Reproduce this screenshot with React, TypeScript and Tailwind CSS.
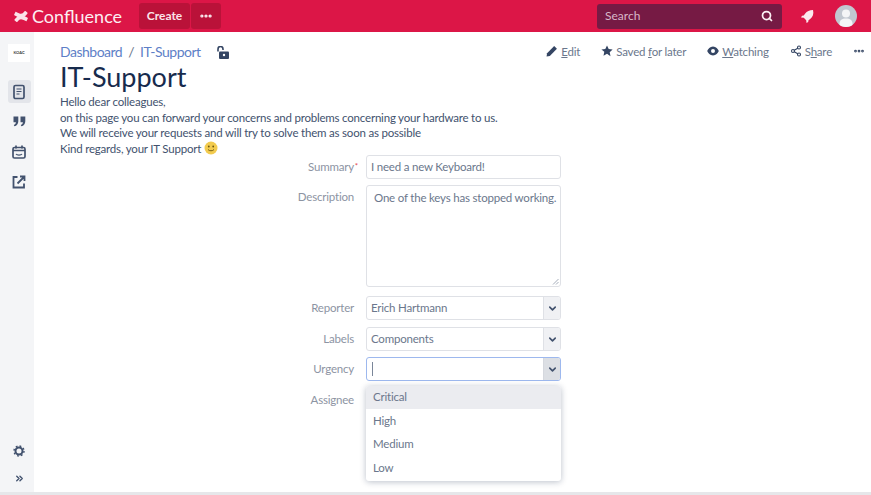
import React from "react";
import { Search, MoreHorizontal, ChevronDown, ChevronsRight, Share2 } from "lucide-react";

const font = { fontFamily: '"Lato", "Noto Sans", sans-serif' };

function Label({ children }: { children: React.ReactNode }) {
  return <div className="w-[332px] pr-[12px] text-right text-[#8d94a3] text-[11.5px] tracking-[-0.2px] leading-[24px] shrink-0">{children}</div>;
}

function Select({ value, focus }: { value?: string; focus?: boolean }) {
  return (
    <div className={`w-[195px] h-[24px] rounded-[3px] border flex overflow-hidden bg-white ${focus ? "border-[#9db8ee]" : "border-[#dfe1e6]"}`}>
      <div className="flex-1 flex items-center pl-[4px] text-[#6b778c] text-[11.5px] tracking-[-0.2px]">
        {focus ? <span className="w-px h-[14px] ml-px bg-[#7a8699]" /> : value}
      </div>
      <div className={`w-[17px] flex items-center justify-center border-l ${focus ? "bg-[#dcdfe4] border-[#d5d8de]" : "bg-[#f0f1f4] border-[#dfe1e6]"}`}>
        <ChevronDown size={11} strokeWidth={3.5} className="text-[#42526e]" />
      </div>
    </div>
  );
}

function Action({ icon, children }: { icon: React.ReactNode; children: React.ReactNode }) {
  return (
    <div className="flex items-center gap-[3px] text-[#6b778c] text-[11.5px] tracking-[-0.2px] leading-none">
      <span className="text-[#344563] -mt-[3px]">{icon}</span>
      {children}
    </div>
  );
}

export default function App() {
  return (
    <div style={font} className="w-[871px] h-[495px] overflow-hidden flex flex-col bg-white">
      <header className="h-[32px] shrink-0 bg-[#dc1647] flex items-center text-white">
        <div className="flex items-center pl-[14px] w-[139px]">
          <svg width="14" height="13" viewBox="0 0 14 13" fill="#fbe3e9">
            <path d="M0.5 9.6C2.8 6.6 4.6 5.2 7 5.2c2.2 0 4 1.2 6.6 2.6.3.2.4.5.2.8l-1.2 2.3c-.2.3-.5.4-.8.2C9.5 10 8.2 9.3 7 9.3c-1.1 0-2.3.8-3.6 2.5-.2.3-.5.3-.8.1L.7 10.5c-.3-.2-.4-.6-.2-.9z" />
            <path d="M13.5 3.4C11.2 6.4 9.4 7.8 7 7.8c-2.2 0-4-1.2-6.6-2.6-.3-.2-.4-.5-.2-.8L1.4 2.1c.2-.3.5-.4.8-.2C4.5 3 5.800 3.700 7 3.700c1.100 0 2.300-.8 3.600-2.500.2-.3.5-.3.8-.1l1.900 1.400c.3.2.4.6.2.9z" />
          </svg>
          <span className="ml-[4px] text-[18px] leading-none text-[#fdeef2]">Confluence</span>
        </div>
        <div className="w-[51px] h-[26px] rounded-[3px] bg-[#ba1239] flex items-center justify-center text-[12px] font-bold text-[#fbe3e9]">Create</div>
        <div className="ml-[1px] w-[30px] h-[26px] rounded-[3px] bg-[#ba1239] flex items-center justify-center">
          <MoreHorizontal size={14} strokeWidth={3.5} />
        </div>
        <div className="ml-[376px] w-[185px] h-[25px] rounded-[3px] bg-[#761a44] flex items-center justify-between pl-[8px] pr-[9px] text-[12px] text-[#d6b8c8]">
          Search
          <Search size={12} strokeWidth={3.5} className="text-[#fbf0f4]" />
        </div>
        <div className="ml-[18px] w-[14px] flex justify-center">
          <svg width="14" height="14" viewBox="0 0 14 14" fill="#fbe9ee">
            <path d="M13 1c-3.5 0-6 1.2-8 3.8L3.8 6.5 2 6.8 1 8.5l2.8.3 2.4 2.4.3 2.8 1.7-1 .3-1.8 1.7-1.2C12.8 8 14 5 13 1z" />
          </svg>
        </div>
        <div className="ml-[21px] w-[22px] h-[22px] rounded-full bg-[#c1c7d0] flex items-center justify-center overflow-hidden">
          <svg width="22" height="22" viewBox="0 0 22 22" fill="#f4f5f7">
            <circle cx="11" cy="8.5" r="4" />
            <path d="M4.5 19c0-4 2.5-5.5 6.5-5.5s6.5 1.5 6.500 5.500v3h-13z" />
          </svg>
        </div>
      </header>
      <div className="flex-1 flex min-h-0 border-b-[3px] border-[#e6e7ea]">
        <aside className="w-[34px] shrink-0 bg-[#f4f5f7] flex flex-col items-center text-[#42526e] pl-[4px] pt-[12px] pb-[8px]">
          <div className="w-[22px] h-[18px] bg-white flex items-center justify-center text-[4px] font-bold text-[#333] whitespace-nowrap overflow-hidden">
            <span>KOAC</span>
          </div>
          <div className="mt-[18px] w-[23px] h-[23px] rounded-[3px] bg-[#e3e5ea] flex items-center justify-center">
            <svg width="14" height="16" viewBox="0 0 14 16" fill="none" stroke="currentColor" strokeWidth="1.7">
              <rect x="2" y="1.5" width="10" height="13" rx="1.5" />
              <path d="M4.5 5h5M4.5 7.5h5M4.5 10h3" strokeWidth="1.2" />
            </svg>
          </div>
          <div className="mt-[7px] h-[23px] flex items-center">
            <svg width="13" height="11" viewBox="0 0 13 11" fill="currentColor">
              <path d="M0.5 0.5h4.8v4.8c0 2.7-1.5 4.5-3.9 5l-.6-1.4c1.3-.4 2-1.2 2.1-2.6H.5z" />
              <path d="M7.5 0.5h4.8v4.8c0 2.7-1.5 4.5-3.9 5l-.6-1.4c1.3-.4 2-1.2 2.1-2.6H7.5z" />
            </svg>
          </div>
          <div className="mt-[7px] h-[23px] flex items-center">
            <svg width="14" height="14" viewBox="0 0 14 14" fill="none" stroke="currentColor" strokeWidth="1.7">
              <rect x="1" y="2.5" width="12" height="10.5" rx="1.5" />
              <path d="M4 .5v3M10 .5v3M1 5.5h12" />
              <path d="M4 9c1 1.4 5 1.4 6 0" strokeWidth="1.2" />
            </svg>
          </div>
          <div className="mt-[7px] h-[23px] flex items-center">
            <svg width="14" height="14" viewBox="0 0 14 14" fill="none" stroke="currentColor" strokeWidth="1.8">
              <path d="M5.5 2H1.5v10.5H12V8.5" />
              <path d="M5.5 8.5 12 2M8 1.5h4.5V6" />
            </svg>
          </div>
          <svg className="mt-auto mb-[16px]" width="12" height="12" viewBox="0 0 12 12" fill="none" stroke="currentColor">
            <circle cx="6" cy="6" r="3.5" strokeWidth="2" />
            <circle cx="6" cy="6" r="5" strokeWidth="1.4" strokeDasharray="1.8 2.12" />
          </svg>
          <ChevronsRight size={11} strokeWidth={3} />
        </aside>
        <main className="flex-1 pl-[26px] pr-[6px] text-[#42526e] min-w-0">
          <div className="flex items-center justify-between pt-[10px] h-[30px]">
            <div className="flex items-center text-[14px] tracking-[-0.5px] text-[#5e7fc7] leading-none">
              <span>Dashboard</span>
              <span className="mx-[6px] text-[#6b778c]">/</span>
              <span>IT-Support</span>
              <svg className="ml-[16px]" width="12" height="13" viewBox="0 0 12 13" fill="#344563">
                <rect x="2" y="5.5" width="10" height="7.5" rx="1" />
                <path d="M1 5.5V3a2.5 2.5 0 0 1 5 0v1" fill="none" stroke="#344563" strokeWidth="1.6" />
                <circle cx="7" cy="9" r="1.2" fill="#fff" />
              </svg>
            </div>
            <div className="flex items-center gap-[21px]">
              <Action icon={<svg width="12" height="12" viewBox="0 0 11 11" fill="currentColor"><path d="M0.5 10.5 1 7.5 7.5 1l2.5 2.5L3.5 10z" /></svg>}><span><u>E</u>dit</span></Action>
              <Action icon={<svg width="12" height="12" viewBox="0 0 12 12" fill="currentColor"><path d="M6 .5l1.7 3.6 3.9.5-2.9 2.7.8 3.9L6 8.8l-3.5 1.900.8-3.900L.4 4.600l3.900-.5z" /></svg>}><span>Saved <u>f</u>or later</span></Action>
              <Action icon={<svg width="12" height="10" viewBox="0 0 12 10" fill="currentColor"><path fillRule="evenodd" d="M6 .5C9 .5 11 3 11.8 5 11 7 9 9.5 6 9.5S1 7 .2 5C1 3 3 .5 6 .5zM6 3a2 2 0 1 0 0 4 2 2 0 0 0 0-4z" /></svg>}><span><u>W</u>atching</span></Action>
              <Action icon={<Share2 size={12} strokeWidth={2.2} />}><span>S<u>h</u>are</span></Action>
              <MoreHorizontal size={12} strokeWidth={3.5} className="text-[#344563] -mt-[3px]" />
            </div>
          </div>
          <h1 className="text-[27px] leading-[32px] text-[#172b4d] -mt-[1px]">IT-Support</h1>
          <div className="text-[11.5px] tracking-[-0.2px] leading-[15.5px] mt-[1px] text-[#42526e]">
            <p>Hello dear colleagues,</p>
            <p>on this page you can forward your concerns and problems concerning your hardware to us.</p>
            <p>We will receive your requests and will try to solve them as soon as possible</p>
            <p className="flex items-center">Kind regards, your IT Support
              <svg className="ml-[3px]" width="14" height="14" viewBox="0 0 14 14">
                <circle cx="7" cy="7" r="6.5" fill="#f2cb4f" />
                <circle cx="4.8" cy="5.5" r="0.9" fill="#6b5510" />
                <circle cx="9.2" cy="5.5" r="0.9" fill="#6b5510" />
                <path d="M4 8.5c1.2 1.7 4.8 1.7 6 0" fill="none" stroke="#6b5510" strokeWidth="0.9" />
              </svg>
            </p>
          </div>
          <div className="-ml-[26px] relative -mt-[1px]">
            <div className="flex items-start h-[30px]">
              <div className="w-[332px] pr-[12px] text-right text-[#8d94a3] text-[11.5px] tracking-[-0.2px] leading-[24px] shrink-0 relative">Summary<span className="absolute right-[8px] -top-[1px] text-[#e5484d] text-[8px]">*</span></div>
              <div className="w-[195px] h-[24px] rounded-[3px] border border-[#dfe1e6] text-[#6b778c] text-[11.5px] tracking-[-0.2px] leading-[22px] pl-[4px]">I need a new Keyboard!</div>
            </div>
            <div className="flex items-start h-[111px]">
              <Label>Description</Label>
              <div className="relative w-[195px] h-[102px] rounded-[3px] border border-[#dfe1e6] text-[#6b778c] text-[11.5px] tracking-[-0.2px] leading-[23px] pl-[7px]">
                One of the keys has stopped working.
                <svg className="absolute right-[1px] bottom-[1px]" width="7" height="7" viewBox="0 0 7 7" stroke="#a5adba" strokeWidth="1"><path d="M1 6.5 6.5 1M4 6.5 6.5 4" /></svg>
              </div>
            </div>
            <div className="flex items-start h-[31px]"><Label>Reporter</Label><Select value="Erich Hartmann" /></div>
            <div className="flex items-start h-[30px]"><Label>Labels</Label><Select value="Components" /></div>
            <div className="flex items-start h-[31px]"><Label>Urgency</Label><Select focus /></div>
            <div className="flex items-start"><Label>Assignee</Label></div>
            <div className="absolute left-[332px] top-[231px] w-[195px] h-[95px] bg-white rounded-[3px] shadow-[0_1px_6px_rgba(9,30,66,0.28)] text-[11.5px] tracking-[-0.2px] text-[#6b778c] z-10">
              <div className="h-[23px] px-[7px] leading-[22px] bg-[#ebecf0] rounded-t-[3px]">Critical</div>
              <div className="h-[24px] px-[7px] leading-[23px]">High</div>
              <div className="h-[23px] px-[7px] leading-[22px]">Medium</div>
              <div className="h-[24px] px-[7px] leading-[23px]">Low</div>
            </div>
          </div>
        </main>
      </div>
    </div>
  );
}
